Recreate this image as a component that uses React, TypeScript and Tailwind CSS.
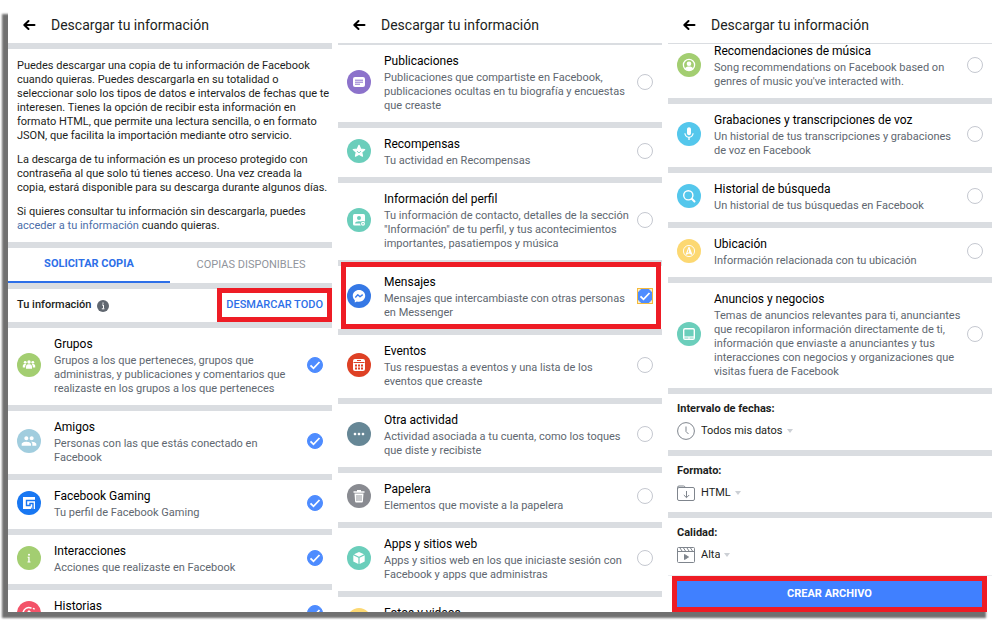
import React from 'react';
import { MdPeople, MdMic, MdMoreHoriz } from 'react-icons/md';

interface Category {
  id: string;
  title: string;
  description?: string;
  color: string;
  icon: React.ReactNode;
  checked?: boolean;
  highlighted?: boolean;
}

const GroupIcon = () => (
  <svg className="w-6 h-6" viewBox="0 0 24 24" fill="#fff">
    <circle cx="8.200" cy="9.300" r="1.400" />
    <circle cx="15.800" cy="9.300" r="1.400" />
    <circle cx="12" cy="9" r="1.700" />
    <path d="M5.800 14.500v-1.600c0-1.300 1-1.800 2.300-1.800.4 0 .8.100 1.100.2-.7.600-1 1.400-1 2.300v.9zM18.200 14.500v-1.600c0-1.300-1-1.800-2.300-1.800-.4 0-.8.100-1.100.2.7.6 1 1.400 1 2.300v.9z" />
    <path d="M9 15.800v-2.300c0-1.600 1.300-2.200 3-2.200s3 .6 3 2.200v2.300z" />
  </svg>
);

const PostIcon = () => (
  <svg className="w-6 h-6" viewBox="0 0 24 24" fill="none">
    <rect x="6" y="7" width="12" height="10" rx="2" fill="#fff" />
    <path d="M8 10.200h8M8 12.200h8M8 14.200h5" stroke="#8c72cb" strokeWidth="1" />
  </svg>
);

const StarIcon = () => (
  <svg className="w-6 h-6" viewBox="0 0 24 24">
    <path
      d="M12 6.300l1.700 3.700 4 .5-3 2.700.8 4-3.500-2-3.500 2 .8-4-3-2.700 4-.5z"
      fill="#fff"
      stroke="#fff"
      strokeWidth="1.200"
      strokeLinejoin="round"
    />
    <path d="M10.400 12.400c.5 1.700 2.700 1.700 3.200 0" stroke="#6bcebb" strokeWidth="1" fill="none" strokeLinecap="round" />
  </svg>
);

const ProfileIcon = () => (
  <svg className="w-6 h-6" viewBox="0 0 24 24">
    <rect x="6" y="6" width="12" height="11.500" rx="1.500" fill="#fff" />
    <circle cx="12" cy="10" r="2" fill="#6bcebb" />
    <path d="M8 15.500c0-3 8-3 8 0z" fill="#6bcebb" />
    <circle cx="16" cy="15.800" r="2.800" fill="#6bcebb" />
    <circle cx="16" cy="15.800" r="1.400" fill="none" stroke="#fff" strokeWidth="1.200" />
  </svg>
);

const MessengerIcon = () => (
  <svg className="w-6 h-6" viewBox="0 0 24 24">
    <path d="M12 6c-3.500 0-6.200 2.500-6.200 5.800 0 1.800.8 3.300 2 4.400V18.500l2.100-1.100c.7.200 1.400.3 2.100.3 3.500 0 6.200-2.600 6.200-5.900S15.500 6 12 6z" fill="#fff" />
    <path d="M8.300 13.400l2.500-2.600 2.200 1.900 2.700-2.100" stroke="#3b7ded" strokeWidth="1.400" fill="none" strokeLinejoin="round" />
  </svg>
);

const CalendarIcon = () => (
  <svg className="w-6 h-6" viewBox="0 0 24 24">
    <rect x="6" y="6" width="12" height="12" rx="2" fill="#fff" />
    <path d="M10 7.500h4M6.500 9.500h11" stroke="#de4125" strokeWidth="1" />
    <path d="M8 12.500h2M11 12.500h2M14 12.500h2M8 15.500h2M11 15.500h2M14 15.500h2" stroke="#de4125" strokeWidth="1.800" />
  </svg>
);

const TrashIcon = () => (
  <svg className="w-6 h-6" viewBox="0 0 24 24">
    <path d="M10 6h4v1.200h3.500v1.600h-11V7.200H10zM7.500 9.600h9l-.6 8a1 1 0 0 1-1 .9H9.100a1 1 0 0 1-1-.9z" fill="#fff" />
    <path d="M10 11v6M12 11v6M14 11v6" stroke="#898b91" strokeWidth=".9" />
  </svg>
);

const CubeIcon = () => (
  <svg className="w-6 h-6" viewBox="0 0 24 24" fill="#fff">
    <path d="M12 6l5 2.300-5 2.400-5-2.400zM6.300 9.300l5.100 2.400v6.300l-5.100-2.600zM17.700 9.300l-5.100 2.400v6.300l5.100-2.600z" />
  </svg>
);

const GamingIcon = () => (
  <svg className="w-6 h-6" viewBox="0 0 24 24">
    <path d="M6 6h12v12h-3l-1-2v2H6z" fill="#fff" />
    <path d="M18 9.500H9.500v5H13v-2h3V18" fill="none" stroke="#1877f2" strokeWidth="1.400" />
  </svg>
);

const LetterIIcon = () => (
  <svg className="w-6 h-6" viewBox="0 0 24 24" fill="#fff">
    <circle cx="12" cy="8.800" r="1" />
    <path d="M10.600 10.800h2v4.700h.9v.9h-3v-.9h.8v-3.800h-.7z" />
  </svg>
);

const StoriesIcon = () => (
  <svg className="w-6 h-6" viewBox="0 0 24 24" fill="none" stroke="#fff" strokeWidth="1.500" strokeLinecap="round">
    <path d="M14 7a5.800 5.800 0 1 0 3.600 6M9 13.500l3-3.500 1.500 1.500M16.500 7.500l.6.400" />
  </svg>
);

const PhotoIcon = () => (
  <svg className="w-6 h-6" viewBox="0 0 24 24">
    <rect x="6" y="7.500" width="12" height="9" rx="1.500" fill="#fff" />
    <path d="M8 15l3-4 2 2.500 1.500-1.500 2 3z" fill="#fcd872" />
  </svg>
);

const PersonRingIcon = () => (
  <svg className="w-6 h-6" viewBox="0 0 24 24">
    <circle cx="12" cy="12" r="5.600" fill="none" stroke="#fff" strokeWidth="1.300" />
    <circle cx="12" cy="10.700" r="2.300" fill="#fff" />
    <path d="M8 15.500c1-2.600 7-2.600 8 0-2 2.300-6 2.300-8 0z" fill="#fff" />
  </svg>
);

const SearchIcon = () => (
  <svg className="w-6 h-6" viewBox="0 0 24 24" fill="none" stroke="#fff" strokeWidth="1.400" strokeLinecap="round">
    <circle cx="11.300" cy="11.300" r="4.600" />
    <path d="M14.800 14.800l2.700 2.700" strokeWidth="2" />
  </svg>
);

const LocationIcon = () => (
  <svg className="w-6 h-6" viewBox="0 0 24 24" fill="none" stroke="#fff">
    <circle cx="12" cy="12" r="5.600" strokeWidth=".9" />
    <path d="M12 8.200l-2.700 7 2.700-1.400 2.700 1.400z" strokeWidth="1.100" strokeLinejoin="round" />
    <path d="M12 8.200v5.600l2.700 1.400z" fill="#fff" stroke="none" />
  </svg>
);

const TabletIcon = () => (
  <svg className="w-6 h-6" viewBox="0 0 24 24" fill="none" stroke="#fff">
    <rect x="6.700" y="6.700" width="10.600" height="10.600" rx="1.300" strokeWidth="1.400" />
    <path d="M7 15h10" strokeWidth="1.200" />
    <path d="M11 16h2" strokeWidth="1" />
  </svg>
);

const FIRST: Category[] = [
  {
    id: 'grupos',
    title: 'Grupos',
    description: 'Grupos a los que perteneces, grupos que administras, y publicaciones y comentarios que realizaste en los grupos a los que perteneces',
    color: 'bg-[#a3ce71]',
    icon: <GroupIcon />,
    checked: true,
  },
  {
    id: 'amigos',
    title: 'Amigos',
    description: 'Personas con las que estás conectado en Facebook',
    color: 'bg-[#a1cdde]',
    icon: <MdPeople className="w-4 h-4" />,
    checked: true,
  },
  { id: 'gaming', title: 'Facebook Gaming', description: 'Tu perfil de Facebook Gaming', color: 'bg-[#1877f2]', icon: <GamingIcon />, checked: true },
  { id: 'interacciones', title: 'Interacciones', description: 'Acciones que realizaste en Facebook', color: 'bg-[#a3ce71]', icon: <LetterIIcon />, checked: true },
  { id: 'historias', title: 'Historias', color: 'bg-[#f35369]', icon: <StoriesIcon />, checked: true },
];

const SECOND: Category[] = [
  {
    id: 'publicaciones',
    title: 'Publicaciones',
    description: 'Publicaciones que compartiste en Facebook, publicaciones ocultas en tu biografía y encuestas que creaste',
    color: 'bg-[#8c72cb]',
    icon: <PostIcon />,
  },
  { id: 'recompensas', title: 'Recompensas', description: 'Tu actividad en Recompensas', color: 'bg-[#6bcebb]', icon: <StarIcon /> },
  {
    id: 'perfil',
    title: 'Información del perfil',
    description: 'Tu información de contacto, detalles de la sección "Información" de tu perfil, y tus acontecimientos importantes, pasatiempos y música',
    color: 'bg-[#6bcebb]',
    icon: <ProfileIcon />,
  },
  {
    id: 'mensajes',
    title: 'Mensajes',
    description: 'Mensajes que intercambiaste con otras personas en Messenger',
    color: 'bg-[#3578e5]',
    icon: <MessengerIcon />,
    checked: true,
    highlighted: true,
  },
  { id: 'eventos', title: 'Eventos', description: 'Tus respuestas a eventos y una lista de los eventos que creaste', color: 'bg-[#de4125]', icon: <CalendarIcon /> },
  {
    id: 'otra',
    title: 'Otra actividad',
    description: 'Actividad asociada a tu cuenta, como los toques que diste y recibiste',
    color: 'bg-[#668796]',
    icon: <MdMoreHoriz className="w-4 h-4" />,
  },
  { id: 'papelera', title: 'Papelera', description: 'Elementos que moviste a la papelera', color: 'bg-[#898b91]', icon: <TrashIcon /> },
  {
    id: 'apps',
    title: 'Apps y sitios web',
    description: 'Apps y sitios web en los que iniciaste sesión con Facebook y apps que administras',
    color: 'bg-[#6bcebb]',
    icon: <CubeIcon />,
  },
  { id: 'fotos', title: 'Fotos y videos', color: 'bg-[#fcd872]', icon: <PhotoIcon /> },
];

const THIRD: Category[] = [
  {
    id: 'musica',
    title: 'Recomendaciones de música',
    description: "Song recommendations on Facebook based on genres of music you've interacted with.",
    color: 'bg-[#a3ce71]',
    icon: <PersonRingIcon />,
  },
  {
    id: 'voz',
    title: 'Grabaciones y transcripciones de voz',
    description: 'Un historial de tus transcripciones y grabaciones de voz en Facebook',
    color: 'bg-[#54c7ec]',
    icon: <MdMic className="w-4 h-4" />,
  },
  { id: 'busqueda', title: 'Historial de búsqueda', description: 'Un historial de tus búsquedas en Facebook', color: 'bg-[#54c7ec]', icon: <SearchIcon /> },
  { id: 'ubicacion', title: 'Ubicación', description: 'Información relacionada con tu ubicación', color: 'bg-[#fcd872]', icon: <LocationIcon /> },
  {
    id: 'anuncios',
    title: 'Anuncios y negocios',
    description:
      'Temas de anuncios relevantes para ti, anunciantes que recopilaron información directamente de ti, información que enviaste a anunciantes y tus interacciones con negocios y organizaciones que visitas fuera de Facebook',
    color: 'bg-[#6bcebb]',
    icon: <TabletIcon />,
  },
];

const ClockIcon = () => (
  <svg className="w-[18px] h-[18px]" viewBox="0 0 18 18" fill="none" stroke="#7f858d">
    <circle cx="9" cy="9" r="8.400" />
    <path d="M9 4.500V9.500l2.500 2.500" />
  </svg>
);

const FolderIcon = () => (
  <svg className="w-[18px] h-[18px]" viewBox="0 0 18 18" fill="none" stroke="#7f858d">
    <path d="M.5 15V3.500A1.500 1.500 0 0 1 2 2h4.500A1.500 1.500 0 0 1 8 3.500h8A1.500 1.500 0 0 1 17.500 5v10a1.500 1.500 0 0 1-1.500 1.500H2A1.500 1.500 0 0 1 .5 15z" />
    <path d="M.5 5A1.500 1.500 0 0 1 2 3.500h6M9.500 7v6.500M6.800 11l2.700 2.700 2.700-2.700" />
  </svg>
);

const ClapperIcon = () => (
  <svg className="w-[18px] h-[18px]" viewBox="0 0 18 18" fill="none" stroke="#7f858d">
    <rect x=".5" y="1.500" width="17" height="15" rx="1" />
    <path d="M.5 5.500h17M3 2l2 3M6.500 2l2 3M10 2l2 3M13.500 2l2 3" />
    <path d="M7.500 8.500v5l4-2.500z" fill="#7f858d" />
  </svg>
);

const OPTIONS = [
  { id: 'fechas', label: 'Intervalo de fechas:', value: 'Todos mis datos', icon: <ClockIcon /> },
  { id: 'formato', label: 'Formato:', value: 'HTML', icon: <FolderIcon /> },
  { id: 'calidad', label: 'Calidad:', value: 'Alta', icon: <ClapperIcon /> },
];

const Header: React.FC = () => (
  <header className="flex items-center gap-[15px] h-[35px] shrink-0 px-3.5 pb-0.5 bg-white">
    <button type="button" aria-label="Atrás">
      <svg className="w-3.5 h-3.5" viewBox="0 0 14 14" fill="none" stroke="#000" strokeWidth="2" strokeLinecap="round" strokeLinejoin="round">
        <path d="M12.500 7H2.500M6.500 3L2.300 7l4.200 4" />
      </svg>
    </button>
    <h1 className="text-[14px] leading-5 text-[#1c1e21]">Descargar tu información</h1>
  </header>
);

const CategoryRow: React.FC<{ item: Category }> = ({ item }) => (
  <label className="relative flex items-center shrink-0 border-b-6 border-[#dadde1] pt-1.5 pb-[9px] px-[9px]">
    <span className={`flex items-center justify-center w-6 h-6 shrink-0 rounded-full text-white ${item.color}`}>{item.icon}</span>
    <span className="flex-1 ml-[13px] mr-1.5">
      <span className="block text-[12px] leading-5 text-black">{item.title}</span>
      <span className="block min-h-3.5 text-[11px] leading-[14px] text-[#606770]">{item.description}</span>
    </span>
    <span className={`grid w-4 h-4 shrink-0 ${item.highlighted ? 'bg-[#fdeec4] outline-1 -outline-offset-1 outline-[#f5b93a]' : ''}`}>
      <input
        type="checkbox"
        defaultChecked={item.checked}
        className="peer col-start-1 row-start-1 appearance-none w-4 h-4 rounded-full border border-[#c5c8d0] checked:border-[#4e8cff] checked:bg-[#4e8cff]"
      />
      <svg
        className="col-start-1 row-start-1 w-4 h-4 opacity-0 peer-checked:opacity-100 pointer-events-none"
        viewBox="0 0 16 16"
        fill="none"
        stroke="#fff"
        strokeWidth="1.800"
      >
        <path d="M3.500 8.300l3 3 6-6.300" />
      </svg>
    </span>
    {item.highlighted && <span className="absolute -top-1 bottom-0 left-[3px] right-px border-5 border-[#ee1c25] pointer-events-none" />}
  </label>
);

export default function App() {
  return (
    <div className="h-screen p-2 bg-white overflow-hidden font-['Roboto',sans-serif]">
      <main className="grid grid-cols-3 gap-1.5 h-full bg-white shadow-[-6px_6px_2px_#707070]">
        <section className="flex flex-col min-h-0 overflow-hidden">
          <Header />
          <div className="flex flex-col gap-2.5 shrink-0 border-y-6 border-[#dadde1] pt-2.5 pb-[9px] pl-[9px] pr-0.5 text-[11px] leading-[14px] text-[#1c1e21]">
            <p>
              Puedes descargar una copia de tu información de Facebook cuando quieras. Puedes descargarla en su totalidad o
              seleccionar solo los tipos de datos e intervalos de fechas que te interesen. Tienes la opción de recibir esta
              información en formato HTML, que permite una lectura sencilla, o en formato JSON, que facilita la importación
              mediante otro servicio.
            </p>
            <p>
              La descarga de tu información es un proceso protegido con contraseña al que solo tú tienes acceso. Una vez creada la
              copia, estará disponible para su descarga durante algunos días.
            </p>
            <p>
              Si quieres consultar tu información sin descargarla, puedes{' '}
              <a href="#informacion" className="text-[#4b6ea9]">acceder a tu información</a> cuando quieras.
            </p>
          </div>

          <div className="grid grid-cols-2 h-[41px] shrink-0 border-b-6 border-[#dadde1] text-[11px]">
            <button type="button" className="border-b-2 border-[#2d6fe8] font-bold text-[#2d6fe8]">SOLICITAR COPIA</button>
            <button type="button" className="text-[#90949c]">COPIAS DISPONIBLES</button>
          </div>

          <div className="flex items-center h-[39px] shrink-0 border-b-6 border-[#dadde1] pl-[9px]">
            <h2 className="text-[11px] font-medium text-[#1c1e21]">Tu información</h2>
            <svg className="ml-1.5 w-3 h-3" viewBox="0 0 12 12">
              <circle cx="6" cy="6" r="6" fill="#606770" />
              <path d="M5 5h1.500v3.500M4.800 8.800h2.600M6 2.500v1.300" stroke="#fff" fill="none" />
            </svg>
            <button type="button" className="ml-auto self-stretch -mt-px border-5 border-[#ee1c25] px-1 text-[11px] font-medium text-[#2d6fe8]">
              DESMARCAR TODO
            </button>
          </div>

          {FIRST.map((item) => <CategoryRow key={item.id} item={item} />)}
        </section>

        <section className="flex flex-col min-h-0 overflow-hidden">
          <Header />
          <div className="border-t-2 border-[#dadde1]">
            {SECOND.map((item) => <CategoryRow key={item.id} item={item} />)}
          </div>
        </section>

        <section className="flex flex-col min-h-0 overflow-hidden">
          <Header />
          <div className="flex-1 min-h-0 overflow-hidden border-t border-[#dadde1]">
            <div className="-mt-[9px]">
              {THIRD.map((item) => <CategoryRow key={item.id} item={item} />)}
              {OPTIONS.map((option) => (
                <div key={option.id} className="border-b-6 border-[#dadde1] last:border-b-0 px-[9px] pt-2 pb-2.5 text-[11px] leading-[14px] text-[#1c1e21]">
                  <label htmlFor={option.id} className="block font-bold">{option.label}</label>
                  <div className="flex items-center mt-1.5">
                    {option.icon}
                    <select id={option.id} className="appearance-none field-sizing-content ml-1.5 h-[18px] bg-transparent">
                      <option>{option.value}</option>
                    </select>
                    <svg className="ml-1 w-1.5 h-1" viewBox="0 0 6 4"><path d="M0 0h6L3 4z" fill="#ccd0d5" /></svg>
                  </div>
                </div>
              ))}
            </div>
          </div>
          <div className="shrink-0 border-t border-[#ebedf0] pl-1 pr-[5px]">
            <button type="button" className="w-full h-9 border-5 border-[#ee1c25] bg-[#4080ff] text-[11px] font-bold text-white">
              CREAR ARCHIVO
            </button>
          </div>
        </section>
      </main>
    </div>
  );
}
